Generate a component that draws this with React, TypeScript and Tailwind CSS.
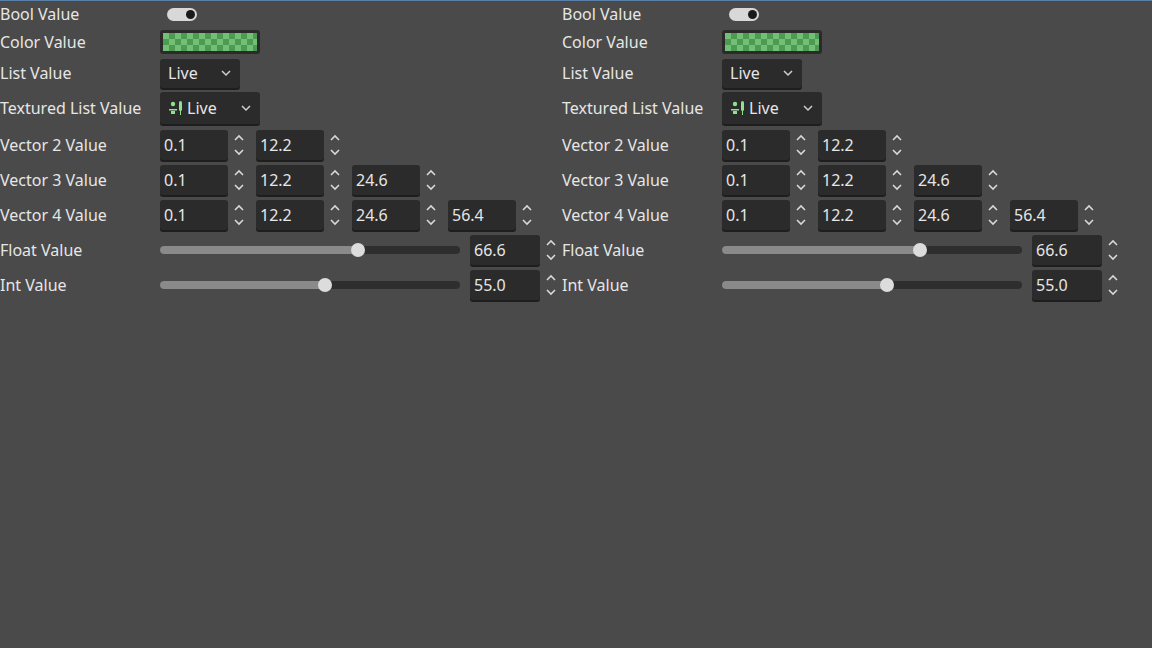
import React from "react";

const Spin = () => (
  <svg width="12" height="28" viewBox="0 0 12 28" className="shrink-0">
    <path d="M2 9 L6 5 L10 9" stroke="#d8d8d8" strokeWidth="1.6" fill="none" />
    <path d="M2 19 L6 23 L10 19" stroke="#d8d8d8" strokeWidth="1.6" fill="none" />
  </svg>
);

const Num = ({ v, w = "w-[68px]" }: { v: string; w?: string }) => (
  <div className="flex items-center gap-[5px]">
    <div className={`${w} h-[30px] bg-[#2b2b2b] rounded-[3px] flex items-center px-[4px] text-[#e6e6e6] shadow-[0_2px_0_#1e1e1e]`}>{v}</div>
    <Spin />
  </div>
);

const Chevron = () => (
  <svg width="12" height="12" viewBox="0 0 12 12">
    <path d="M2 4 L6 8 L10 4" stroke="#cfcfcf" strokeWidth="1.5" fill="none" />
  </svg>
);

const Label = ({ t }: { t: string }) => <div className="w-[160px] shrink-0 text-[#e6e6e6]">{t}</div>;

const Slider = ({ f, v }: { f: number; v: string }) => (
  <div className="flex items-center">
    <div className="relative w-[300px] h-[8px] rounded-full bg-[#2e2e2e]">
      <div className="absolute left-0 top-0 h-full rounded-full bg-[#8a8a8a]" style={{ width: `${f * 100}%` }} />
      <div className="absolute top-1/2 w-[14px] h-[14px] -mt-[7px] -ml-[7px] rounded-full bg-[#dcdcdc]" style={{ left: `${f * 100}%` }} />
    </div>
    <div className="ml-[10px]"><Num v={v} w="w-[70px]" /></div>
  </div>
);

const Column = () => (
  <div className="w-[562px] flex flex-col">
    <div className="h-[26px] flex items-center">
      <Label t="Bool Value" />
      <div className="ml-[7px] w-[30px] h-[13px] rounded-full bg-[#d8d8d8] relative">
        <div className="absolute right-[2px] top-[2px] w-[9px] h-[9px] rounded-full bg-[#1a1a1a]" />
      </div>
    </div>
    <div className="h-[30px] flex items-center">
      <Label t="Color Value" />
      <div className="w-[100px] h-[24px] rounded-[3px] bg-[#2b2b2b] p-[3px]">
        <div className="w-full h-full bg-[#5fae62]" style={{ backgroundImage: "repeating-conic-gradient(#4f9a52 0 25%, #72c075 0 50%)", backgroundSize: "12px 12px" }} />
      </div>
    </div>
    <div className="h-[32px] flex items-center">
      <Label t="List Value" />
      <div className="w-[80px] h-[29px] bg-[#2b2b2b] rounded-[3px] flex items-center justify-between px-[8px] text-[#e6e6e6] shadow-[0_2px_0_#1e1e1e]">Live<Chevron /></div>
    </div>
    <div className="h-[38px] flex items-center">
      <Label t="Textured List Value" />
      <div className="w-[100px] h-[32px] bg-[#2b2b2b] rounded-[3px] flex items-center justify-between pl-[8px] pr-[8px] text-[#e6e6e6] shadow-[0_2px_0_#1e1e1e]">
        <span className="flex items-center gap-[3px]">
          <svg width="16" height="16" viewBox="0 0 16 16"><circle cx="5" cy="4" r="2.2" fill="#8fe08f"/><path d="M1 9h8v1.5H1zM3 11h4v3H3z" fill="#8fe08f"/><rect x="11" y="1" width="3" height="10" rx="1.5" fill="#8fe08f"/><rect x="12" y="11" width="1" height="4" fill="#8fe08f"/></svg>
          Live
        </span>
        <Chevron />
      </div>
    </div>
    <div className="h-[35px] flex items-center"><Label t="Vector 2 Value" /><div className="flex gap-[11px]"><Num v="0.1" /><Num v="12.2" /></div></div>
    <div className="h-[35px] flex items-center"><Label t="Vector 3 Value" /><div className="flex gap-[11px]"><Num v="0.1" /><Num v="12.2" /><Num v="24.6" /></div></div>
    <div className="h-[35px] flex items-center"><Label t="Vector 4 Value" /><div className="flex gap-[11px]"><Num v="0.1" /><Num v="12.2" /><Num v="24.6" /><Num v="56.4" /></div></div>
    <div className="h-[35px] flex items-center"><Label t="Float Value" /><Slider f={0.66} v="66.6" /></div>
    <div className="h-[35px] flex items-center"><Label t="Int Value" /><Slider f={0.55} v="55.0" /></div>
  </div>
);

export default function App() {
  return (
    <div className="w-[1152px] h-[648px] bg-[#4a4a4a] border-t border-[#5a7fa8] flex text-[16px] overflow-hidden" style={{ fontFamily: '"Noto Sans", sans-serif' }}>
      <Column />
      <Column />
    </div>
  );
}
